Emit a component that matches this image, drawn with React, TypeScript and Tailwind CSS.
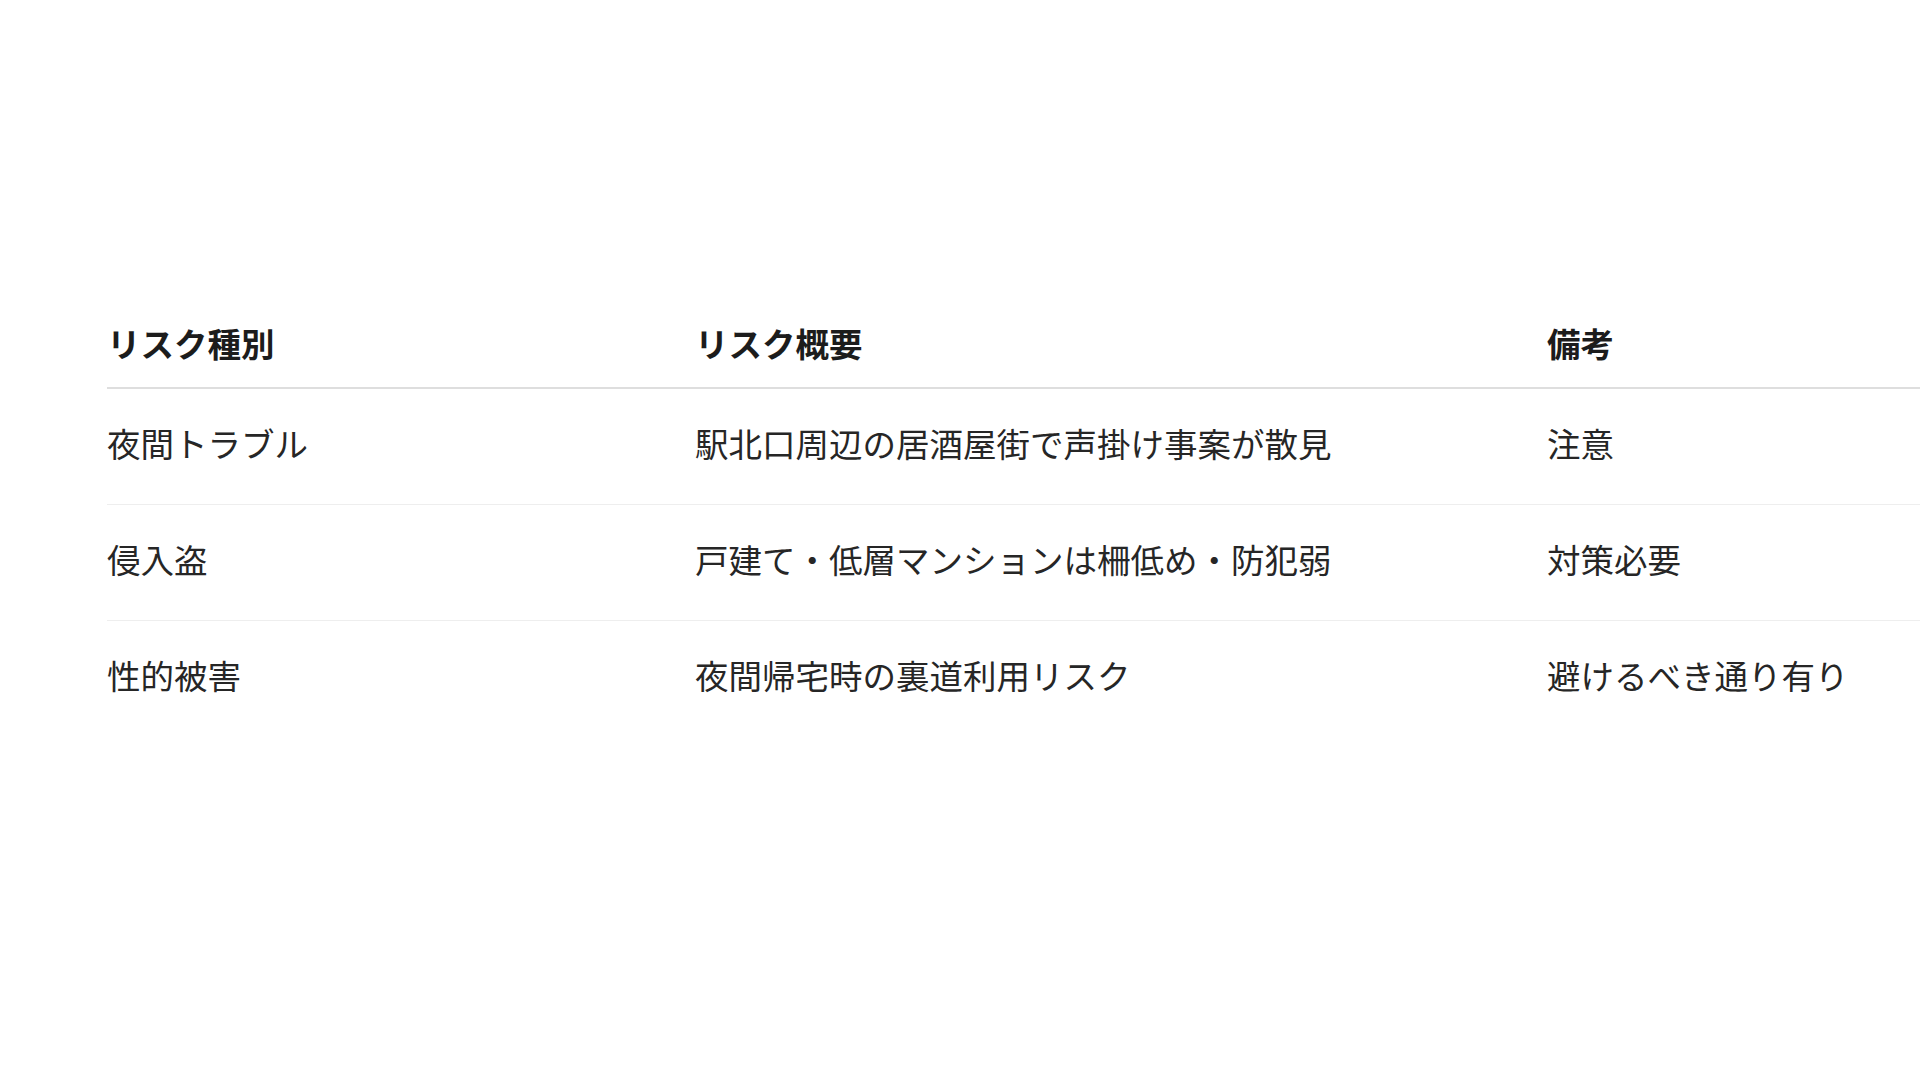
const rows = [
  { kind: '夜間トラブル', summary: '駅北口周辺の居酒屋街で声掛け事案が散見', note: '注意' },
  { kind: '侵入盗', summary: '戸建て・低層マンションは柵低め・防犯弱', note: '対策必要' },
  { kind: '性的被害', summary: '夜間帰宅時の裏道利用リスク', note: '避けるべき通り有り' },
]

export default function App() {
  return (
    <div
      className="h-screen w-full overflow-hidden bg-white pl-[107px] pt-[318px]"
      style={{ fontFamily: '"Noto Sans CJK JP", "Noto Sans", sans-serif' }}
    >
      <div className="w-full">
        <div className="grid grid-cols-[588px_852px_1fr] border-b-2 border-[#dedede] pb-[19px] text-[33.5px] font-semibold leading-[50px] text-[#1c1c1c]">
          <div>リスク種別</div>
          <div>リスク概要</div>
          <div>備考</div>
        </div>
        {rows.map((r, i) => (
          <div
            key={r.kind}
            className={
              i < rows.length - 1
                ? 'grid grid-cols-[588px_852px_1fr] border-b border-[#eeeeee] pt-[29px] pb-[36px] text-[33.5px] leading-[50px] text-[#262626]'
                : 'grid grid-cols-[588px_852px_1fr] pt-[29px] pb-[36px] text-[33.5px] leading-[50px] text-[#262626]'
            }
          >
            <div>{r.kind}</div>
            <div>{r.summary}</div>
            <div>{r.note}</div>
          </div>
        ))}
      </div>
    </div>
  )
}
